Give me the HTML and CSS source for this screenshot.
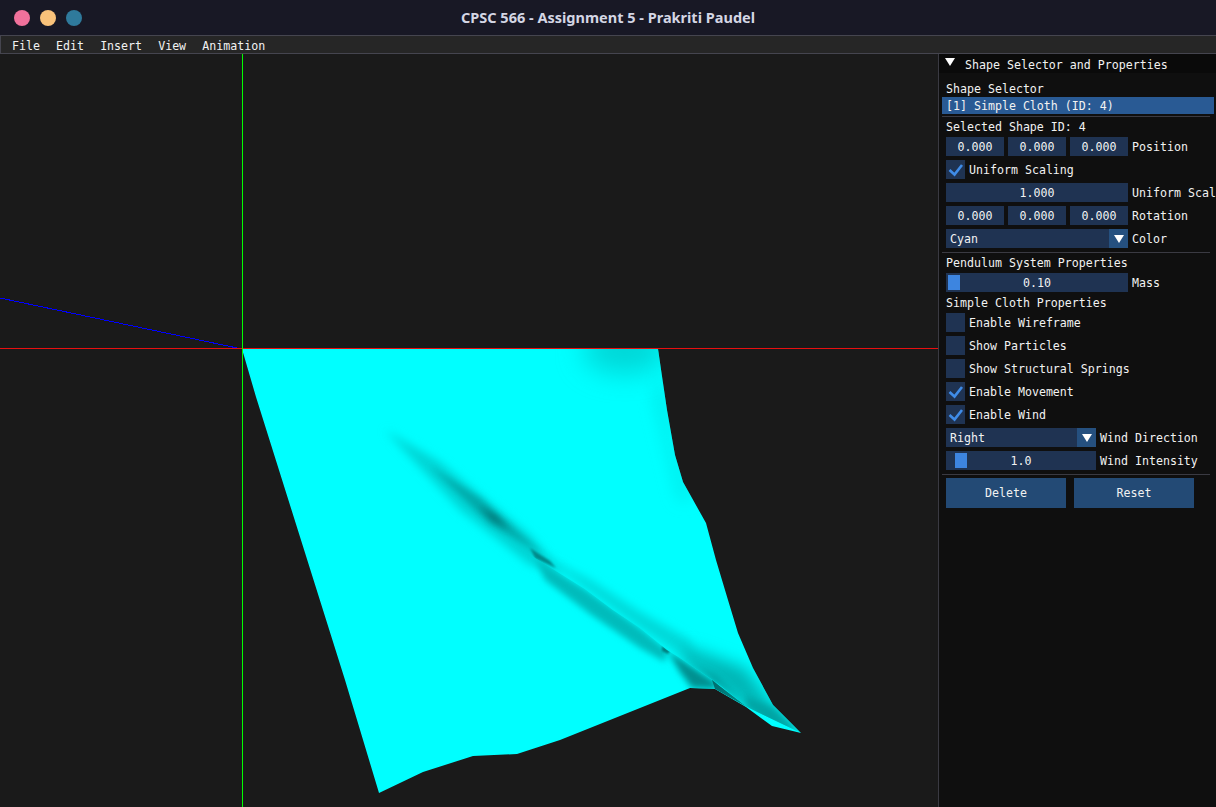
FILE: index.html
```html
<!DOCTYPE html>
<html>
<head>
<meta charset="utf-8">
<title>CPSC 566 - Assignment 5 - Prakriti Paudel</title>
<link rel="stylesheet" href="styles.css">
</head>
<body>
<div class="window">
  <header class="titlebar">
    <div class="lights"><span class="light pink"></span><span class="light orange"></span><span class="light teal"></span></div>
    <div class="title">CPSC 566 - Assignment 5 - Prakriti Paudel</div>
  </header>
  <nav class="menubar"><span>File</span><span>Edit</span><span>Insert</span><span>View</span><span>Animation</span></nav>
  <main class="workspace">
    <div class="viewport">
      <svg class="scene" width="938" height="753" viewBox="0 54 938 753">
        <defs>
          <clipPath id="cloth"><path class="crisp" d="M242 349 L256 397 L345 680 L379 793 L423 772 L473 756 L517 754 L560 740 L640 708 L690 688 L715 689 L746 707 L772 726 L801 733 L773 705 L753 668 L738 633 L728 600 L716 560 L706 523 L683 482 L675 455 L667 410 L658 349 Z"/></clipPath>
          <clipPath id="upper"><path d="M300 349 L700 349 L900 700 L801 733 L747 707 L717 683 L680 658 L667 650 L640 628 L613 610 L585 589 L535 558 L490 518 L380 430 Z"/></clipPath>
          <clipPath id="lower"><path d="M200 420 L380 430 L490 518 L535 558 L585 589 L613 610 L640 628 L667 650 L680 658 L717 683 L747 707 L801 733 L500 800 Z"/></clipPath>
          <filter id="b1" x="-30%" y="-30%" width="160%" height="160%"><feGaussianBlur stdDeviation="1"/></filter>
          <filter id="b3" x="-30%" y="-30%" width="160%" height="160%"><feGaussianBlur stdDeviation="3"/></filter>
          <filter id="b5" x="-30%" y="-30%" width="160%" height="160%"><feGaussianBlur stdDeviation="5"/></filter>
          <filter id="b8" x="-50%" y="-50%" width="200%" height="200%"><feGaussianBlur stdDeviation="8"/></filter>
          <filter id="b13" x="-60%" y="-60%" width="220%" height="220%"><feGaussianBlur stdDeviation="13"/></filter>
          <linearGradient id="wedge" gradientUnits="userSpaceOnUse" x1="700" y1="675" x2="747" y2="707">
            <stop offset="0" stop-color="#006464"/>
            <stop offset="1" stop-color="#008c8c"/>
          </linearGradient>
        </defs>
        <g clip-path="url(#cloth)">
          <rect x="230" y="340" width="600" height="470" fill="#00ffff"/>
          <ellipse cx="625" cy="350" rx="42" ry="24" fill="#00d8d8" filter="url(#b13)"/>
          <path d="M660 370 L672 440 L690 500 L680 500 L655 400 Z" fill="#00e6e6" filter="url(#b8)"/>
          <path d="M385 430 L440 462 L530 535 L565 575 L530 565 L460 510 Z" fill="#00d4d4" filter="url(#b5)"/>
          <path d="M430 466 L480 498 L545 556 L490 524 Z" fill="#00aaaa" filter="url(#b3)"/>
          <path d="M478 505 L496 516 L510 530 L492 520 Z" fill="#007272" filter="url(#b3)"/>
          <g clip-path="url(#upper)">
            <path d="M535 552 L590 580 L640 612 L690 640 L700 668 L640 628 Z" fill="#00d8d8" filter="url(#b5)"/>
            <path d="M530 548 L550 561 L556 568 L535 558 Z" fill="#008a8a" filter="url(#b1)"/>
            <path d="M690 648 L745 668 L773 705 L801 733 L772 726 L747 707 L717 683 L680 658 Z" fill="#00b4b4" filter="url(#b8)"/>
            <path d="M745 695 L773 708 L801 733 L772 726 L747 707 Z" fill="#00a4a4" filter="url(#b3)"/>
            <path d="M690 662 L717 676 L745 703 L717 683 Z" fill="#009898" filter="url(#b3)"/>
          </g>
          <g clip-path="url(#lower)">
            <path d="M535 558 L585 589 L640 628 L667 650 L665 662 L640 648 L590 614 L545 580 Z" fill="#00bcbc" filter="url(#b3)"/>
            <path d="M662 646 L670 651 L668 654 L662 651 Z" fill="#007c7c" filter="url(#b1)"/>
            <path d="M667 650 L717 683 L715 689 L692 688 L680 672 Z" fill="#009090" filter="url(#b3)"/>
          </g>
          <path d="M712 680 L747 707 L715 689 Z" fill="url(#wedge)"/>
        </g>
        <line class="axis axis-blue" x1="0" y1="298" x2="242" y2="349"/>
        <line class="axis axis-red" x1="0" y1="348.500" x2="938" y2="348.500"/>
        <line class="axis axis-green" x1="242.500" y1="54" x2="242.500" y2="807"/>
      </svg>
    </div>
    <aside class="panel">
      <div class="panel-head"><span class="tri"></span><span class="head-text">Shape Selector and Properties</span></div>
      <div class="panel-body">
        <div class="text first">Shape Selector</div>
        <div class="list-item">[1] Simple Cloth (ID: 4)</div>
        <div class="sep"></div>
        <div class="text">Selected Shape ID: 4</div>
        <div class="row">
          <div class="triple"><span class="field">0.000</span><span class="field">0.000</span><span class="field">0.000</span></div>
          <span class="label">Position</span>
        </div>
        <div class="row"><span class="check on"><svg viewBox="0 0 19 19" width="19" height="19"><path d="M3.500 10 L8.500 14.500 L16 5" /></svg></span><span class="check-label">Uniform Scaling</span></div>
        <div class="row">
          <div class="triple"><span class="field">1.000</span></div>
          <span class="label">Uniform Scale</span>
        </div>
        <div class="row">
          <div class="triple"><span class="field">0.000</span><span class="field">0.000</span><span class="field">0.000</span></div>
          <span class="label">Rotation</span>
        </div>
        <div class="row">
          <div class="combo"><span class="combo-value">Cyan</span><span class="combo-arrow"><i></i></span></div>
          <span class="label">Color</span>
        </div>
        <div class="sep sep-tight"></div>
        <div class="text">Pendulum System Properties</div>
        <div class="row">
          <div class="triple slider"><span class="grab mass"></span><span class="field">0.10</span></div>
          <span class="label">Mass</span>
        </div>
        <div class="text sub">Simple Cloth Properties</div>
        <div class="row"><span class="check"></span><span class="check-label">Enable Wireframe</span></div>
        <div class="row"><span class="check"></span><span class="check-label">Show Particles</span></div>
        <div class="row"><span class="check"></span><span class="check-label">Show Structural Springs</span></div>
        <div class="row"><span class="check on"><svg viewBox="0 0 19 19" width="19" height="19"><path d="M3.500 10 L8.500 14.500 L16 5" /></svg></span><span class="check-label">Enable Movement</span></div>
        <div class="row"><span class="check on"><svg viewBox="0 0 19 19" width="19" height="19"><path d="M3.500 10 L8.500 14.500 L16 5" /></svg></span><span class="check-label">Enable Wind</span></div>
        <div class="row">
          <div class="combo narrow"><span class="combo-value">Right</span><span class="combo-arrow"><i></i></span></div>
          <span class="label">Wind Direction</span>
        </div>
        <div class="row">
          <div class="triple narrow slider"><span class="grab wind"></span><span class="field">1.0</span></div>
          <span class="label">Wind Intensity</span>
        </div>
        <div class="sep sep-tight"></div>
        <div class="buttons"><span class="btn">Delete</span><span class="btn">Reset</span></div>
      </div>
    </aside>
  </main>
</div>
</body>
</html>
```
FILE: styles.css
```css
* { box-sizing: border-box; }
html, body { margin: 0; padding: 0; height: 100%; background: #1a1a2a; overflow: hidden; }
.window { width: 1216px; height: 807px; display: flex; flex-direction: column; font-family: "DejaVu Sans Mono", monospace; font-size: 11.62px; color: #f2f2f2; }

.titlebar { height: 35px; background: #181825; display: flex; align-items: center; position: relative; flex: none; }
.lights { display: flex; gap: 10px; padding-left: 14px; }
.light { width: 16px; height: 16px; border-radius: 50%; display: block; }
.pink { background: #f0719b; }
.orange { background: #f9c27a; }
.teal { background: #2f7a9c; }
.title { position: absolute; left: 0; right: 0; top: 0; line-height: 35px; text-align: center; font-family: "Noto Sans", sans-serif; font-weight: 700; font-size: 14.5px; color: #d4d6e4; }

.menubar { height: 19px; flex: none; background: #262626; border: 1px solid #45454f; border-width: 1px 0 1px 1px; display: flex; align-items: center; gap: 16.1px; padding: 2px 0 0 11px; }
.menubar span { white-space: nowrap; }

.workspace { flex: 1; display: flex; min-height: 0; }
.viewport { width: 938px; flex: none; background: #1a1a1a; }
.scene { display: block; }
.crisp { shape-rendering: crispEdges; }
.axis { shape-rendering: crispEdges; stroke-width: 1; }
.axis-red { stroke: #e81010; }
.axis-green { stroke: #00ff00; }
.axis-blue { stroke: #0000ff; }

.panel { flex: 1; background: #0f0f0f; border-left: 1px solid #3a3a42; overflow: hidden; min-width: 0; }
.panel-head { height: 19px; background: #0a0a0a; display: flex; align-items: center; gap: 10px; padding-left: 6px; white-space: nowrap; }
.head-text { padding-top: 2px; }
.tri { width: 0; height: 0; border-left: 5px solid transparent; border-right: 5px solid transparent; border-top: 8px solid #fff; margin-top: -3px; }
.panel-body { padding-left: 7px; display: flex; flex-direction: column; }

.text { height: 14px; line-height: 14px; white-space: nowrap; }
.text.first { margin-top: 9px; }
.text.sub { margin-top: 4px; }

.list-item { height: 17px; display: flex; align-items: center; padding: 1px 0 0 4px; margin: 1px 2px 0 -4px; background: #295a94; white-space: nowrap; }
.sep { height: 1px; background: #3a3a42; margin: 2px 6px 3px -4px; flex: none; }
.sep-tight { margin-top: 4px; margin-bottom: 3px; }

.row { height: 19px; margin-top: 4px; display: flex; align-items: center; flex: none; white-space: nowrap; }
.text + .row { margin-top: 3px; }
.triple { width: 182px; display: flex; gap: 4px; flex: none; height: 19px; position: relative; }
.triple.narrow { width: 150px; }
.field { flex: 1; background: #1f3352; height: 19px; display: flex; align-items: center; justify-content: center; }
.label { margin-left: 4px; }

.grab { position: absolute; top: 2px; height: 15px; width: 12px; background: #3d85e0; z-index: 1; }
.grab.mass { left: 2px; }
.grab.wind { left: 9px; }

.check { width: 19px; height: 19px; background: #1f3352; display: block; flex: none; }
.check svg { display: block; }
.check path { fill: none; stroke: #3f8ce8; stroke-width: 2.6; }
.check-label { margin-left: 4px; }

.combo { width: 182px; height: 19px; background: #1f3352; display: flex; flex: none; }
.combo.narrow { width: 150px; }
.combo-value { flex: 1; padding-left: 4px; display: flex; align-items: center; }
.combo-arrow { width: 19px; height: 19px; background: #25507f; display: flex; align-items: center; justify-content: center; }
.combo-arrow i { width: 0; height: 0; border-left: 5px solid transparent; border-right: 5px solid transparent; border-top: 8px solid #fff; display: block; }

.buttons { display: flex; gap: 8px; }
.btn { width: 120px; height: 30px; display: flex; align-items: center; justify-content: center; background: #234a75; }
```
